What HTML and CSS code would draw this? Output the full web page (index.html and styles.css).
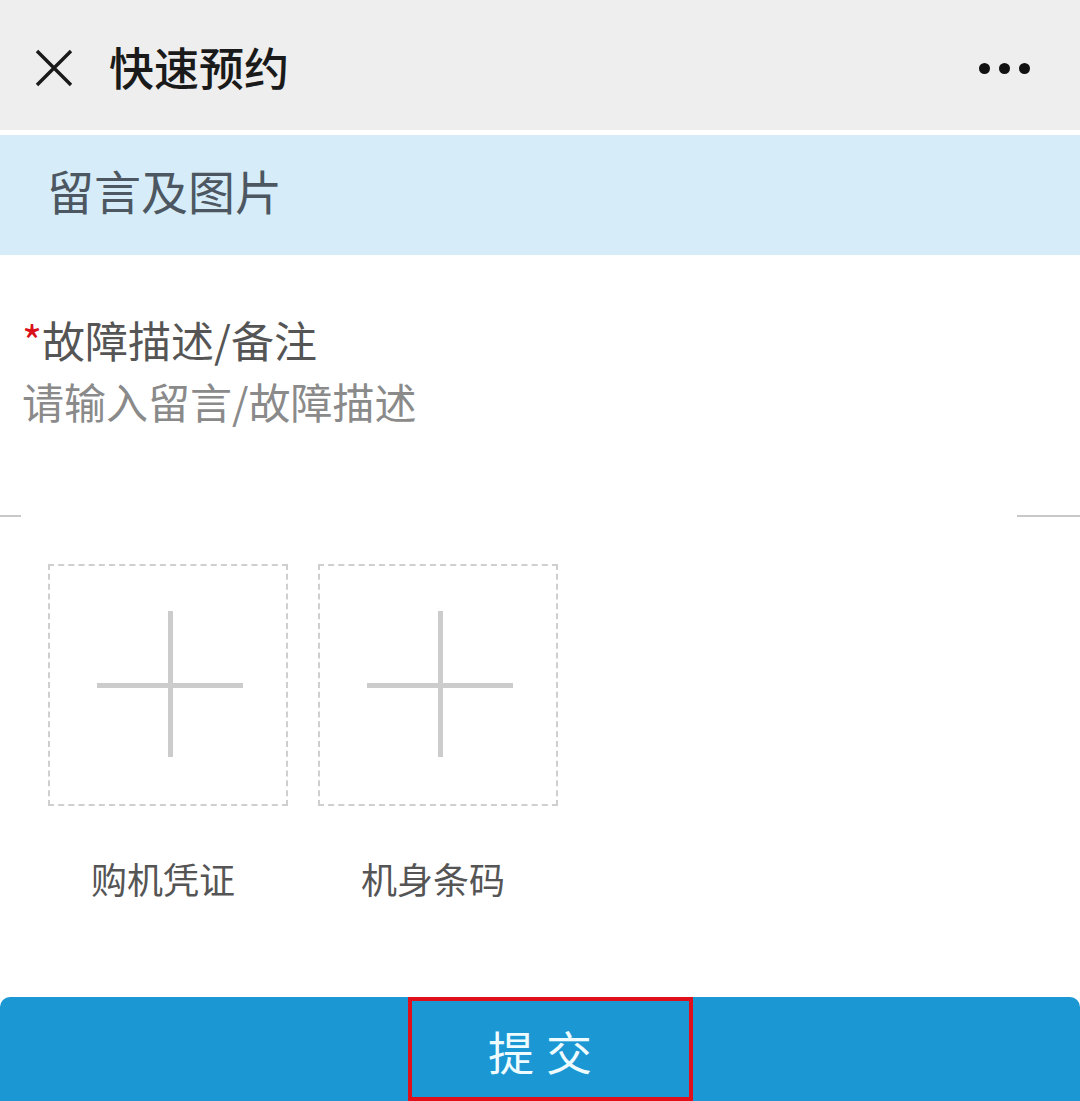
FILE: index.html
```html
<!DOCTYPE html>
<html lang="zh-CN">
<head>
<meta charset="utf-8">
<title>快速预约</title>
<link rel="stylesheet" href="styles.css">
</head>
<body>
<div class="page">
  <header class="topbar">
    <svg class="close" width="38" height="38" viewBox="0 0 38 38">
      <path d="M2 2 L36 36 M36 2 L2 36" stroke="#1a1a1a" stroke-width="3.4" fill="none"/>
    </svg>
    <div class="title">快速预约</div>
    <div class="dots"><span></span><span></span><span></span></div>
  </header>
  <div class="band">留言及图片</div>
  <section class="form">
    <div class="label"><span class="req">*</span>故障描述/备注</div>
    <div class="placeholder">请输入留言/故障描述</div>
    <div class="divider"><span class="seg-left"></span><span class="seg-right"></span></div>
    <div class="uploads">
      <div class="upload">
        <div class="box"><span class="plus-h"></span><span class="plus-v"></span></div>
        <div class="cap">购机凭证</div>
      </div>
      <div class="upload">
        <div class="box"><span class="plus-h"></span><span class="plus-v"></span></div>
        <div class="cap">机身条码</div>
      </div>
    </div>
  </section>
  <div class="submit">
    <span class="submit-text">提交</span>
    <span class="highlight"></span>
  </div>
</div>
</body>
</html>
```

FILE: styles.css
```css
* { box-sizing: border-box; }
html, body { margin: 0; padding: 0; background: #ffffff; }
body {
  font-family: "Noto Sans CJK SC", "Noto Sans", "Liberation Sans", sans-serif;
  width: 1080px;
  height: 1101px;
  overflow: hidden;
}
.page { width: 1080px; display: flex; flex-direction: column; }

.topbar {
  height: 130px;
  background: #eeeeee;
  display: flex;
  align-items: center;
  padding-left: 35px;
  padding-right: 50px;
}
.close { display: block; margin-top: 6px; }
.title {
  margin-left: 36px;
  font-size: 45px;
  font-weight: 500;
  color: #1a1a1a;
  line-height: 50px;
  flex: 1;
  margin-top: 4px;
}
.dots { display: flex; gap: 9px; margin-top: 6px; }
.dots span {
  width: 11px; height: 11px; border-radius: 50%; background: #111111; display: block;
}

.band {
  margin-top: 5px;
  height: 120px;
  background: #d6edf9;
  color: #4d5761;
  font-size: 47px;
  line-height: 110px;
  padding-left: 47px;
}

.form { padding-top: 53px; }
.label {
  font-size: 43px;
  line-height: 62px;
  color: #555555;
  padding-left: 22px;
}
.req { color: #d9101a; }
.placeholder {
  font-size: 42px;
  line-height: 62px;
  color: #8a8a8a;
  padding-left: 22px;
}
.divider {
  margin-top: 83px;
  height: 2px;
  display: flex;
  justify-content: space-between;
}
.seg-left { width: 21px; height: 2px; background: #c8c8c8; }
.seg-right { width: 63px; height: 2px; background: #c8c8c8; }

.uploads {
  display: flex;
  gap: 30px;
  padding-left: 48px;
  margin-top: 47px;
}
.upload { display: flex; flex-direction: column; align-items: center; width: 240px; }
.box {
  width: 240px;
  height: 242px;
  border: 2px dashed #cfcfcf;
  position: relative;
}
.plus-h {
  position: absolute; left: 47px; top: 117px; width: 146px; height: 5px; background: #cccccc;
}
.plus-v {
  position: absolute; left: 118px; top: 45px; width: 5px; height: 146px; background: #cccccc;
}
.cap {
  margin-top: 47px;
  font-size: 36px;
  line-height: 50px;
  color: #555555;
  margin-left: -10px;
}

.submit {
  margin-top: 94px;
  height: 104px;
  background: #1b97d4;
  border-radius: 10px 10px 0 0;
  position: relative;
  display: flex;
  justify-content: center;
  align-items: center;
}
.submit-text {
  color: #eefcff;
  font-size: 46px;
  letter-spacing: 12px;
  padding-left: 12px;
  line-height: 60px;
  margin-top: 2px;
}
.highlight {
  position: absolute;
  left: 408px;
  top: 0;
  width: 285px;
  height: 104px;
  border: 4px solid #e0101a;
}
```
